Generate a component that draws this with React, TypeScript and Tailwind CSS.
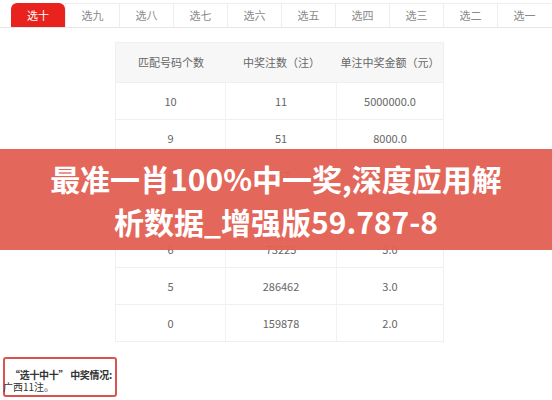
const tabs = ["选十", "选九", "选八", "选七", "选六", "选五", "选四", "选三", "选二", "选一"];

const rows = [
  ["10", "11", "5000000.0"],
  ["9", "51", "8000.0"],
  ["8", "137", "800.0"],
  ["7", "1147", "80.0"],
  ["6", "73225", "5.0"],
  ["5", "286462", "3.0"],
  ["0", "159878", "2.0"],
];

export default function App() {
  return (
    <div
      className="relative w-[552px] h-[400px] overflow-hidden bg-white"
      style={{ fontFamily: '"Noto Sans CJK SC", "Noto Sans", sans-serif' }}
    >
      {/* Tabs */}
      <div className="flex pl-[11px] pt-[3px] border-b border-[#e6e6e6]">
        {tabs.map((t, i) => (
          <div
            key={t}
            className={
              i === 0
                ? "w-[54px] h-[24px] flex items-center justify-center text-[11px] text-white bg-[#e8231d] rounded-t-[6px]"
                : "w-[54px] h-[24px] flex items-center justify-center text-[11px] text-[#8a8a8a] border-l border-t border-[#eeeeee]"
            }
          >
            {t}
          </div>
        ))}
      </div>

      {/* Table */}
      <div className="ml-[115px] mt-[14px] w-[329px] border border-[#efefef] text-[11px] text-[#666]">
        <div className="grid grid-cols-[110px_111px_1fr] h-[39px] bg-[#f7f7f7] text-[#666]">
          <div className="flex items-center justify-center">匹配号码个数</div>
          <div className="flex items-center justify-center">中奖注数（注）</div>
          <div className="flex items-center justify-center">单注中奖金额（元）</div>
        </div>
        {rows.map((r) => (
          <div key={r[0]} className="grid grid-cols-[110px_111px_1fr] h-[37px] border-t border-[#efefef]">
            <div className="flex items-center justify-center border-r border-[#f2f2f2]">{r[0]}</div>
            <div className="flex items-center justify-center border-r border-[#f2f2f2]">{r[1]}</div>
            <div className="flex items-center justify-center">{r[2]}</div>
          </div>
        ))}
      </div>

      {/* Note box */}
      <div className="absolute left-[3px] top-[357px] w-[114px] h-[40px] border-2 border-[#d9534f] rounded-[3px] pt-[10px] text-[10px] leading-[12px] text-[#333] whitespace-nowrap">
        <div className="font-bold pl-[5px] tracking-[-0.3px]">“选十中十” 中奖情况:</div>
        <div className="-ml-[2px]">广西11注。</div>
      </div>

      {/* Banner overlay */}
      <div className="absolute left-0 top-[149px] w-[552px] h-[101px] bg-[rgba(226,96,82,0.95)] flex flex-col items-center justify-center">
        <div className="text-white font-bold text-[30px] leading-[43px] text-center">最准一肖100%中一奖,深度应用解</div>
        <div className="text-white font-bold text-[30px] leading-[43px] text-center">析数据_增强版59.787-8</div>
      </div>
    </div>
  );
}
